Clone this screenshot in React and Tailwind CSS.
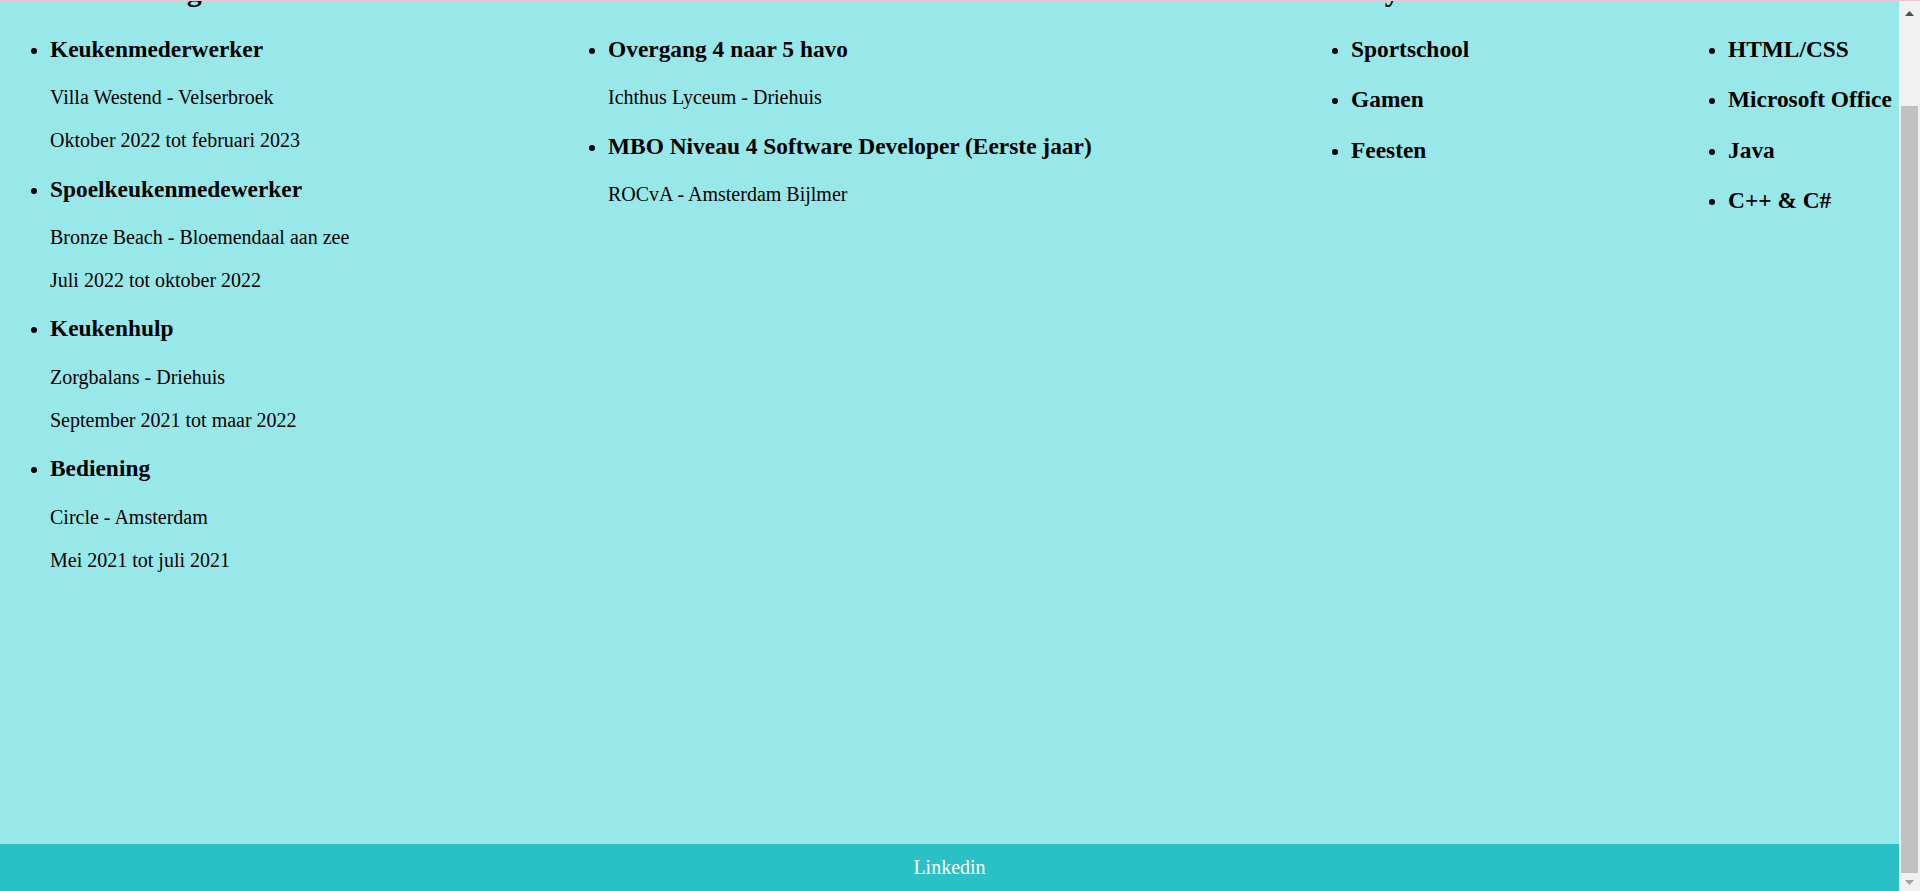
const columns = [
  {
    title: "Werkervaring",
    width: "w-[558px]",
    titleOffset: "ml-[10px]",
    items: [
      { name: "Keukenmederwerker", lines: ["Villa Westend - Velserbroek", "Oktober 2022 tot februari 2023"] },
      { name: "Spoelkeukenmedewerker", lines: ["Bronze Beach - Bloemendaal aan zee", "Juli 2022 tot oktober 2022"] },
      { name: "Keukenhulp", lines: ["Zorgbalans - Driehuis", "September 2021 tot maar 2022"] },
      { name: "Bediening", lines: ["Circle - Amsterdam", "Mei 2021 tot juli 2021"] },
    ],
  },
  {
    title: "School",
    width: "w-[743px]",
    titleOffset: "ml-[4px]",
    items: [
      { name: "Overgang 4 naar 5 havo", lines: ["Ichthus Lyceum - Driehuis"] },
      { name: "MBO Niveau 4 Software Developer (Eerste jaar)", lines: ["ROCvA - Amsterdam Bijlmer"] },
    ],
  },
  {
    title: "Hobby's",
    width: "w-[377px]",
    titleOffset: "ml-[2px]",
    items: [{ name: "Sportschool" }, { name: "Gamen" }, { name: "Feesten" }],
  },
  {
    title: "Technische vaardigheden",
    width: "flex-1",
    titleOffset: "ml-[7px]",
    items: [{ name: "HTML/CSS" }, { name: "Microsoft Office" }, { name: "Java" }, { name: "C++ & C#" }],
  },
];

const Column = ({ column }) => (
  <div className={`${column.width} shrink-0`}>
    <h2 className={`${column.titleOffset} mt-[22.4px] mb-[27.4px] text-[30px] font-bold whitespace-nowrap`}>
      {column.title}
    </h2>
    <ul className="list-disc list-outside pl-[40px] my-[20px]">
      {column.items.map((item) => (
        <li key={item.name}>
          <h3 className="my-[23.4px] text-[23.4px] font-bold whitespace-nowrap">{item.name}</h3>
          {item.lines &&
            item.lines.map((line) => (
              <p key={line} className="my-[20px]">
                {line}
              </p>
            ))}
        </li>
      ))}
    </ul>
  </div>
);

const Scrollbar = () => (
  <div className="w-[21px] h-full shrink-0 bg-[#f1f1f1] flex flex-col">
    <div className="h-[24px] flex items-center justify-center">
      <svg width="9" height="5" viewBox="0 0 9 5">
        <polygon points="0,5 4.5,0 9,5" fill="#505050" />
      </svg>
    </div>
    <div className="flex-1 flex flex-col px-[2px]">
      <div className="mt-[81px] flex-1 bg-[#c1c1c1]" />
    </div>
    <div className="h-[18px] flex items-center justify-center">
      <svg width="9" height="5" viewBox="0 0 9 5">
        <polygon points="0,0 9,0 4.5,5" fill="#a3a3a3" />
      </svg>
    </div>
  </div>
);

export default function App() {
  return (
    <div
      className="w-[1920px] h-[891px] flex flex-col overflow-hidden text-black text-[20px] leading-[normal]"
      style={{ fontFamily: '"Liberation Serif", "Times New Roman", serif' }}
    >
      <div className="h-px shrink-0 bg-[#f2c3d0]" />
      <div className="flex flex-1 min-h-0">
        <div className="flex-1 min-w-0 h-full overflow-hidden flex flex-col justify-end bg-[#99e8e9]">
          <main className="h-[943px] shrink-0 pt-[51px] px-[10px] flex">
            {columns.map((column) => (
              <Column key={column.title} column={column} />
            ))}
          </main>
          <footer className="h-[47px] shrink-0 bg-[#29c1c5] flex items-center justify-center text-white">
            <a>Linkedin</a>
          </footer>
        </div>
        <Scrollbar />
      </div>
    </div>
  );
}
